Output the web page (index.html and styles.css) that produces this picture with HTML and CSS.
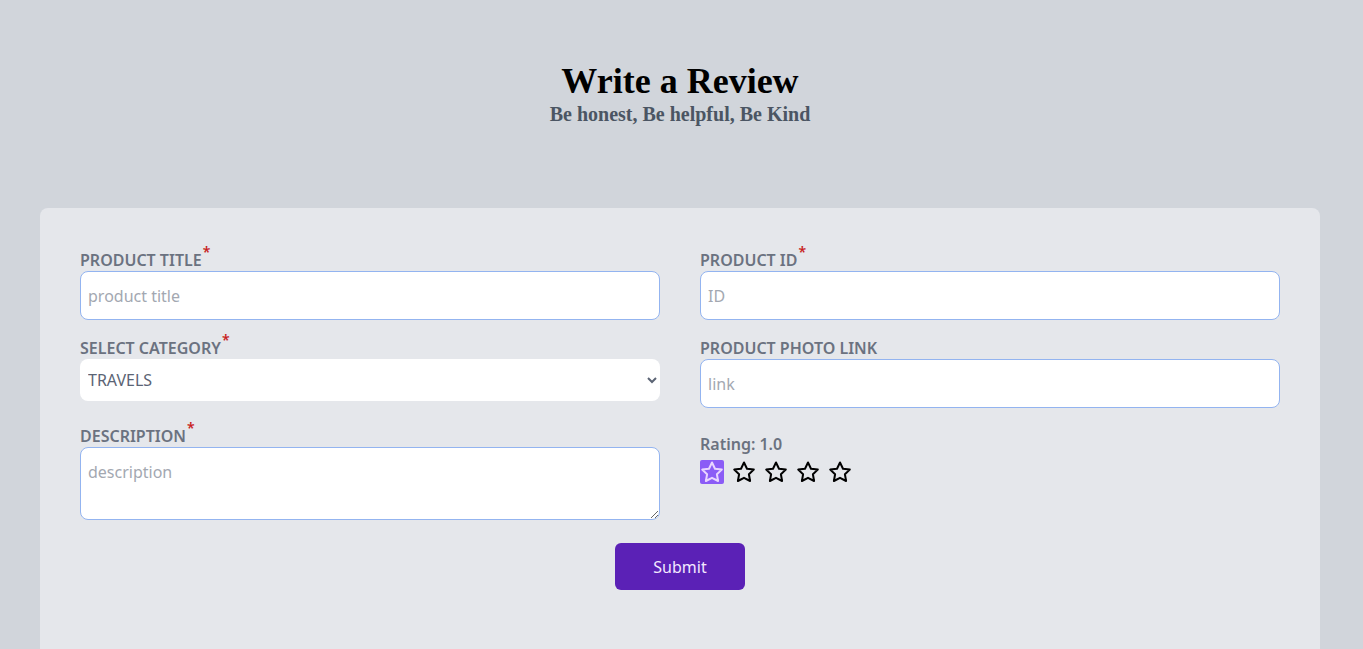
FILE: index.html
```html
<!DOCTYPE html>
<html>
<head>
<meta charset="utf-8">
<link rel="stylesheet" href="styles.css">
</head>
<body>
<div class="page">
<header class="hero">
  <h1 class="hero-title">Write a Review</h1>
  <p class="hero-sub">Be honest, Be helpful, Be Kind</p>
</header>
<main class="card">
  <form class="review-form">
    <div class="field">
      <label class="label">PRODUCT TITLE<sup class="req">*</sup></label>
      <input class="input" type="text" placeholder="product title">
    </div>
    <div class="field">
      <label class="label">PRODUCT ID<sup class="req">*</sup></label>
      <input class="input" type="text" placeholder="ID">
    </div>
    <div class="field">
      <label class="label">SELECT CATEGORY<sup class="req">*</sup></label>
      <select class="select">
        <option>TRAVELS</option>
      </select>
    </div>
    <div class="field">
      <label class="label">PRODUCT PHOTO LINK</label>
      <input class="input" type="text" placeholder="link">
    </div>
    <div class="field">
      <label class="label">DESCRIPTION<sup class="req">*</sup></label>
      <textarea class="textarea" placeholder="description"></textarea>
    </div>
    <div class="field rating">
      <span class="rating-label">Rating: 1.0</span>
      <div class="stars">
        <span class="star active"><svg viewBox="0 0 24 24" width="24" height="24"><polygon points="12 2.5 15 8.7 21.8 9.6 16.9 14.3 18.1 21 12 17.8 5.9 21 7.1 14.3 2.2 9.6 9 8.7" fill="none" stroke="#e9d5ff" stroke-width="2" stroke-linejoin="round"/></svg></span>
        <span class="star"><svg viewBox="0 0 24 24" width="24" height="24"><polygon points="12 2.5 15 8.7 21.8 9.6 16.9 14.3 18.1 21 12 17.8 5.9 21 7.1 14.3 2.2 9.6 9 8.7" fill="none" stroke="#000" stroke-width="2" stroke-linejoin="round"/></svg></span>
        <span class="star"><svg viewBox="0 0 24 24" width="24" height="24"><polygon points="12 2.5 15 8.7 21.8 9.6 16.9 14.3 18.1 21 12 17.8 5.9 21 7.1 14.3 2.2 9.6 9 8.7" fill="none" stroke="#000" stroke-width="2" stroke-linejoin="round"/></svg></span>
        <span class="star"><svg viewBox="0 0 24 24" width="24" height="24"><polygon points="12 2.5 15 8.7 21.8 9.6 16.9 14.3 18.1 21 12 17.8 5.9 21 7.1 14.3 2.2 9.6 9 8.7" fill="none" stroke="#000" stroke-width="2" stroke-linejoin="round"/></svg></span>
        <span class="star"><svg viewBox="0 0 24 24" width="24" height="24"><polygon points="12 2.5 15 8.7 21.8 9.6 16.9 14.3 18.1 21 12 17.8 5.9 21 7.1 14.3 2.2 9.6 9 8.7" fill="none" stroke="#000" stroke-width="2" stroke-linejoin="round"/></svg></span>
      </div>
    </div>
    <div class="actions">
      <button class="submit" type="button">Submit</button>
    </div>
  </form>
</main>
</div>
</body>
</html>
```
FILE: styles.css
```css
html, body {
  margin: 0;
  padding: 0;
}
body {
  background: #d1d5db;
  font-family: "Noto Sans", "Open Sans", sans-serif;
}
.page {
  width: 1360px;
}
.hero {
  padding-top: 61px;
  text-align: center;
  height: 147px;
  box-sizing: border-box;
  height: 208px;
}
.hero-title {
  margin: 0;
  font-family: "Liberation Serif", serif;
  font-size: 36px;
  font-weight: bold;
  color: #000;
  line-height: 40px;
}
.hero-sub {
  margin: 2px 0 0;
  font-family: "Liberation Serif", serif;
  font-size: 20px;
  font-weight: bold;
  color: #4b5563;
}
.card {
  margin: 0 40px;
  background: #e5e7eb;
  border-radius: 8px;
  padding: 40px 40px 70px;
}
.review-form {
  display: grid;
  grid-template-columns: 1fr 1fr;
  column-gap: 40px;
  row-gap: 16px;
}
.field {
  display: flex;
  flex-direction: column;
}
.label {
  font-size: 16px;
  font-weight: 600;
  color: #6b7280;
  line-height: 23px;
  padding-top: 1px;
  margin-bottom: -1px;
}
.req {
  color: #c81e1e;
  font-size: 14px;
  line-height: 0;
  position: relative;
  top: -3px;
  margin-left: 1px;
}
.input, .select, .textarea {
  box-sizing: border-box;
  width: 100%;
  font-family: inherit;
  font-size: 16px;
  background: #fff;
  border-radius: 8px;
  margin: 0;
}
.input {
  height: 49px;
  border: 1px solid #93b4f0;
  padding: 0 7px;
  color: #374151;
}
.input::placeholder, .textarea::placeholder {
  color: #a3a8b1;
}
.select {
  height: 42px;
  border: none;
  padding: 0 4px;
  color: #5b6474;
}
.textarea {
  height: 73px;
  border: 1px solid #93b4f0;
  padding: 13px 7px;
  resize: vertical;
}
.rating {
  padding-top: 10px;
}
.rating-label {
  font-size: 16px;
  font-weight: 600;
  color: #6b7280;
  line-height: 20px;
}
.stars {
  display: flex;
  gap: 8px;
  margin-top: 6px;
}
.star {
  width: 24px;
  height: 24px;
  display: flex;
}
.star.active {
  background: #8b5cf6;
  border-radius: 2px;
}
.actions {
  grid-column: 1 / -1;
  display: flex;
  justify-content: center;
  padding-top: 7px;
}
.submit {
  width: 130px;
  height: 47px;
  border: none;
  border-radius: 6px;
  background: #5b21b6;
  color: #f3e8ff;
  font-family: inherit;
  font-size: 16px;
}
```
